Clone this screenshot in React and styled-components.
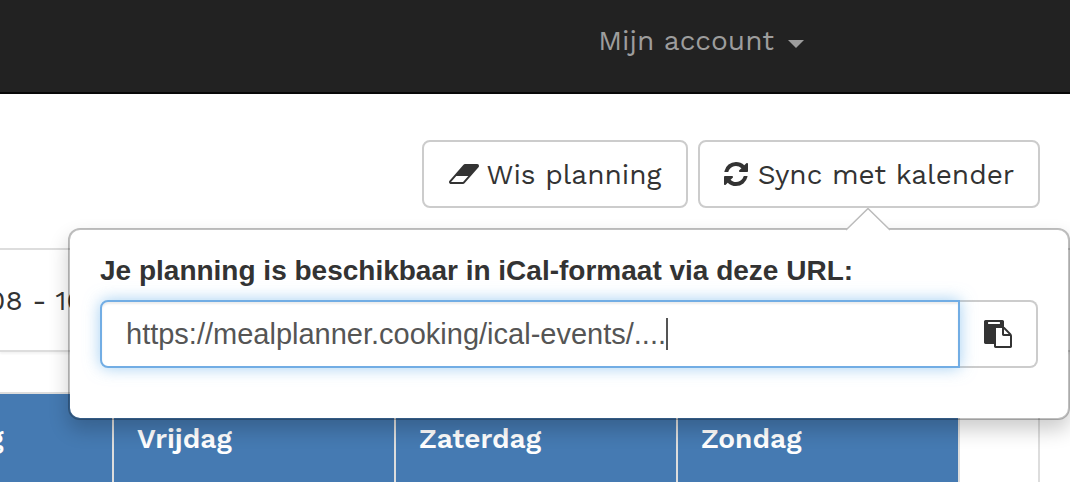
import React from "react";
import styled, { createGlobalStyle } from "styled-components";

const bodyFont = `"Work Sans", "Open Sans", "Liberation Sans", sans-serif`;
const plainFont = `"Helvetica Neue", "Liberation Sans", Arial, sans-serif`;

const GlobalStyle = createGlobalStyle`
  *, *::before, *::after { box-sizing: border-box; }
  body {
    margin: 0;
    background: #fff;
    color: #333;
    font: 28px/40px ${bodyFont};
    overflow: hidden;
  }
`;

const Navbar = styled.nav`
  display: flex;
  justify-content: flex-end;
  height: 94px;
  padding: 21px 266px 0 0;
  background: #222;
  border-bottom: 2px solid #080808;
`;

const AccountLink = styled.a`
  display: flex;
  align-items: center;
  gap: 14px;
  height: 40px;
  color: #9d9d9d;
  text-decoration: none;
`;

const Caret = styled.span`
  border-top: 8px solid;
  border-left: 8px solid transparent;
  border-right: 8px solid transparent;
  margin-top: 5px;
`;

const Toolbar = styled.div`
  position: relative;
  display: flex;
  justify-content: flex-end;
  gap: 10px;
  padding: 46px 30px 0;
`;

const Button = styled.button`
  display: flex;
  align-items: center;
  justify-content: center;
  gap: ${(p) => p.$gap || 8}px;
  height: 68px;
  min-width: ${(p) => p.$width}px;
  padding: 2px 22px 0;
  border: 2px solid #ccc;
  border-radius: 8px;
  background: #fff;
  color: #333;
  font: inherit;
  white-space: nowrap;

  svg {
    margin-bottom: 2px;
  }
`;

const Popover = styled.section`
  position: absolute;
  z-index: 1;
  top: 134px;
  left: 68px;
  right: 0;
  padding: 21px 30px 50px;
  border: 2px solid rgba(0, 0, 0, 0.25);
  border-radius: 12px;
  background: #fff;
  background-clip: padding-box;
  box-shadow: 0 10px 20px rgba(0, 0, 0, 0.2);
  font-family: ${plainFont};
`;

const Arrow = styled.svg`
  position: absolute;
  top: -22px;
  right: 178px;
  width: 44px;
  height: 23px;
`;

const PopoverLabel = styled.label`
  display: block;
  height: 40px;
  margin-bottom: 9px;
  font-weight: 700;
  white-space: nowrap;
`;

const InputGroup = styled.div`
  display: flex;
  height: 68px;
`;

const InputFrame = styled.div`
  position: relative;
  display: flex;
  align-items: center;
  flex: 1;
  padding: 0 24px;
  border: 2px solid #72ade4;
  border-radius: 8px 0 0 8px;
  background: #fff;
  box-shadow: inset 0 2px 2px rgba(0, 0, 0, 0.075), 0 0 16px rgba(102, 175, 233, 0.6);
`;

const UrlInput = styled.input`
  field-sizing: content;
  height: 40px;
  padding: 0;
  border: 0;
  outline: 0;
  background: transparent;
  color: #555;
  caret-color: transparent;
  font: inherit;
  font-size: 29px;
`;

const TextCursor = styled.span`
  width: 2px;
  height: 32px;
  background: #555;
`;

const CopyButton = styled.button`
  display: flex;
  align-items: center;
  justify-content: center;
  width: 78px;
  padding: 0;
  border: 2px solid #ccc;
  border-left: 0;
  border-radius: 0 8px 8px 0;
  background: transparent;
  color: #333;
`;

const WeekBar = styled.div`
  height: 104px;
  margin-top: 40px;
  padding: 31px 0;
  border: solid #ddd;
  border-width: 2px 0;
  box-shadow: 0 2px 2px rgba(0, 0, 0, 0.05);
  text-indent: -12px;
  white-space: pre;
`;

const Planner = styled.div`
  display: flex;
  justify-content: flex-end;
  margin: 40px 30px 0 0;
  padding-right: 78px;
  border-right: 2px solid #ddd;
  overflow: hidden;
`;

const Week = styled.table`
  flex: none;
  width: 1128px;
  table-layout: fixed;
  border-collapse: separate;
  border-spacing: 0;
  border-top: 2px solid #ddd;
`;

const Day = styled.th`
  padding: 25px 23px;
  border-right: 2px solid #ddd;
  background: #457ab2;
  color: #fff;
  font-weight: 600;
  text-align: left;
`;

const EraserIcon = () => (
  <svg width="30" height="20" viewBox="64 256 1920 1280" fill="currentColor" aria-hidden="true">
    <path d="M960 1408l336-384h-768l-336 384h768zm1013-1077q15 34 9.500 71.500t-30.500 65.500l-896 1024q-38 44-96 44h-768q-38 0-69.500-20.500t-47.500-54.500q-15-34-9.500-71.500t30.500-65.500l896-1024q38-44 96-44h768q38 0 69.500 20.500t47.500 54.500z" />
  </svg>
);

const RefreshIcon = () => (
  <svg width="24" height="24" viewBox="128 128 1536 1536" fill="currentColor" aria-hidden="true">
    <path d="M1639 1056q0 5-1 7-64 268-268 434.500t-478 166.500q-146 0-282.500-55t-243.500-157l-129 129q-19 19-45 19t-45-19-19-45v-448q0-26 19-45t45-19h448q26 0 45 19t19 45-19 45l-137 137q71 66 161 102t187 36q134 0 250-65t186-179q11-17 53-117 8-23 30-23h192q13 0 22.500 9.500t9.500 22.500zm25-800v448q0 26-19 45t-45 19h-448q-26 0-45-19t-19-45 19-45l138-138q-148-137-349-137-134 0-250 65t-186 179q-11 17-53 117-8 23-30 23h-199q-13 0-22.500-9.500t-9.500-22.500v-7q65-268 270-434.500t480-166.500q146 0 284 55.500t245 156.500l130-129q19-19 45-19t45 19 19 45z" />
  </svg>
);

const PasteIcon = () => (
  <svg width="28" height="28" viewBox="0 0 1792 1792" fill="currentColor" aria-hidden="true">
    <path d="M768 1664h896v-640h-416q-40 0-68-28t-28-68v-416h-384v1152zm256-1440v-64q0-13-9.500-22.500t-22.500-9.500h-704q-13 0-22.500 9.500t-9.500 22.500v64q0 13 9.500 22.500t22.500 9.500h704q13 0 22.500-9.500t9.500-22.500zm256 672h299l-299-299v299zm512 128v672q0 40-28 68t-68 28h-960q-40 0-68-28t-28-68v-160h-544q-40 0-68-28t-28-68v-1344q0-40 28-68t68-28h1088q40 0 68 28t28 68v328q21 13 36 28l408 408q28 28 48 76t20 88z" />
  </svg>
);

const days = ["Donderdag", "Vrijdag", "Zaterdag", "Zondag"];

export default function App() {
  return (
    <>
      <GlobalStyle />
      <Navbar>
        <AccountLink href="#account">
          Mijn account
          <Caret />
        </AccountLink>
      </Navbar>
      <main>
        <Toolbar>
          <Button type="button" $width={266}>
            <EraserIcon />
            Wis planning
          </Button>
          <Button type="button" $width={342} $gap={10}>
            <RefreshIcon />
            Sync met kalender
          </Button>
          <Popover>
            <Arrow viewBox="0 0 44 23" aria-hidden="true">
              <path d="M0 22L22 0L44 22V23H0Z" fill="#fff" />
              <path d="M0 22L22 0.500L44 22" fill="none" stroke="#bbb" strokeWidth="1.500" />
            </Arrow>
            <PopoverLabel htmlFor="ical-url">
              Je planning is beschikbaar in iCal-formaat via deze URL:
            </PopoverLabel>
            <InputGroup>
              <InputFrame>
                <UrlInput
                  id="ical-url"
                  type="text"
                  defaultValue="https://mealplanner.cooking/ical-events/...."
                />
                <TextCursor />
              </InputFrame>
              <CopyButton type="button" aria-label="Kopieer URL">
                <PasteIcon />
              </CopyButton>
            </InputGroup>
          </Popover>
        </Toolbar>
        <WeekBar>08 - 10</WeekBar>
        <Planner>
          <Week>
            <thead>
              <tr>
                {days.map((day) => (
                  <Day key={day} scope="col">
                    {day}
                  </Day>
                ))}
              </tr>
            </thead>
          </Week>
        </Planner>
      </main>
    </>
  );
}
